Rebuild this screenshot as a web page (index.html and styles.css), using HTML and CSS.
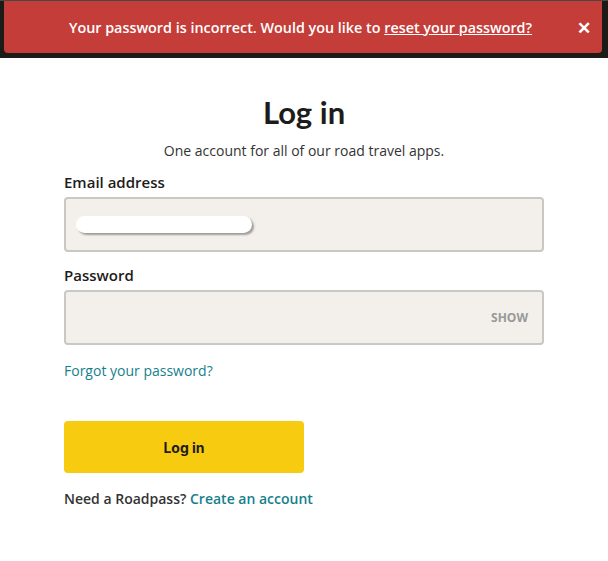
FILE: index.html
```html
<!DOCTYPE html>
<html>
<head>
    <title>Log in</title>
    <link rel="stylesheet" href="styles.css">
</head>
<body>
    <div id="alertbar">
        <div class="alert">
            <span class="alert-text">Your password is incorrect. Would you like to <a href="#">reset your password?</a></span>
            <span class="alert-close">&#x2715;</span>
        </div>
    </div>
    <div id="container">
        <h1>Log in</h1>
        <p class="subtitle">One account for all of our road travel apps.</p>
        <label class="field-label">Email address</label>
        <div class="field">
            <div class="blur"></div>
        </div>
        <label class="field-label">Password</label>
        <div class="field field-password">
            <span class="show">SHOW</span>
        </div>
        <a class="forgot" href="#">Forgot your password?</a>
        <button class="submit">Log in</button>
        <p class="signup">Need a Roadpass? <a href="#">Create an account</a></p>
    </div>
</body>
</html>
```

FILE: styles.css
```css
html {
    height: 100%;
    background-color: #fff;
    padding: 0;
    margin: 0;
}

body {
    height: 100%;
    overflow: hidden;
    padding: 0;
    margin: 0;
    font-family: "Open Sans", "Liberation Sans", sans-serif;
    color: #222;
}

#alertbar {
    background-color: #1d1b18;
    border-top: 1px solid #4a4844;
    padding: 0 6px 5px 4px;
}

.alert {
    height: 52px;
    background-color: #c43d38;
    border-radius: 0 0 4px 4px;
    display: flex;
    align-items: center;
    color: #fff;
    font-size: 14.35px;
    font-weight: 600;
}

    .alert-text {
        flex: 1;
        text-align: center;
        padding-left: 30px;
    }

    .alert a {
        color: #fff;
    }

.alert-close {
    width: 34px;
    font-size: 17px;
    font-weight: 700;
    margin-right: 1px;
    text-align: center;
}

#container {
    width: 480px;
    margin: 0 auto;
    display: flex;
    flex-direction: column;
}

h1 {
    font-family: "Lato", "Open Sans", sans-serif;
    font-size: 31px;
    font-weight: 700;
    color: #1e1c1a;
    text-align: center;
    margin: 36px 0 0;
    line-height: 36px;
}

.subtitle {
    text-align: center;
    font-size: 14px;
    color: #333;
    margin: 11px 0 11px;
    line-height: 20px;
}

.field-label {
    font-size: 15px;
    font-weight: 600;
    color: #1e1c1a;
    line-height: 20px;
    margin-bottom: 5px;
}

.field {
    height: 51px;
    background-color: #f3f0eb;
    border: 2px solid #cac8c2;
    border-radius: 4px;
    display: flex;
    align-items: center;
    margin-bottom: 13px;
}

.blur {
    width: 176px;
    height: 17px;
    margin-left: 10px;
    background-color: #fff;
    border-radius: 9px;
    box-shadow: 2px 2px 2px rgba(0, 0, 0, 0.35);
}

.field-password {
    justify-content: flex-end;
    margin-bottom: 16px;
}

.show {
    font-size: 12px;
    font-weight: 700;
    color: #999;
    margin-right: 14px;
}

.forgot {
    font-size: 14px;
    color: #167f8b;
    text-decoration: none;
    line-height: 20px;
}

.submit {
    width: 240px;
    height: 52px;
    margin-top: 40px;
    background-color: #f6cb10;
    border: none;
    border-radius: 4px;
    font-family: "Inter", "Liberation Sans", sans-serif;
    font-size: 14px;
    font-weight: 700;
    color: #1e1c1a;
}

.signup {
    font-size: 14px;
    font-weight: 600;
    color: #333;
    margin: 16px 0 0;
    line-height: 20px;
}

    .signup a {
        color: #167f8b;
        text-decoration: none;
    }
```
